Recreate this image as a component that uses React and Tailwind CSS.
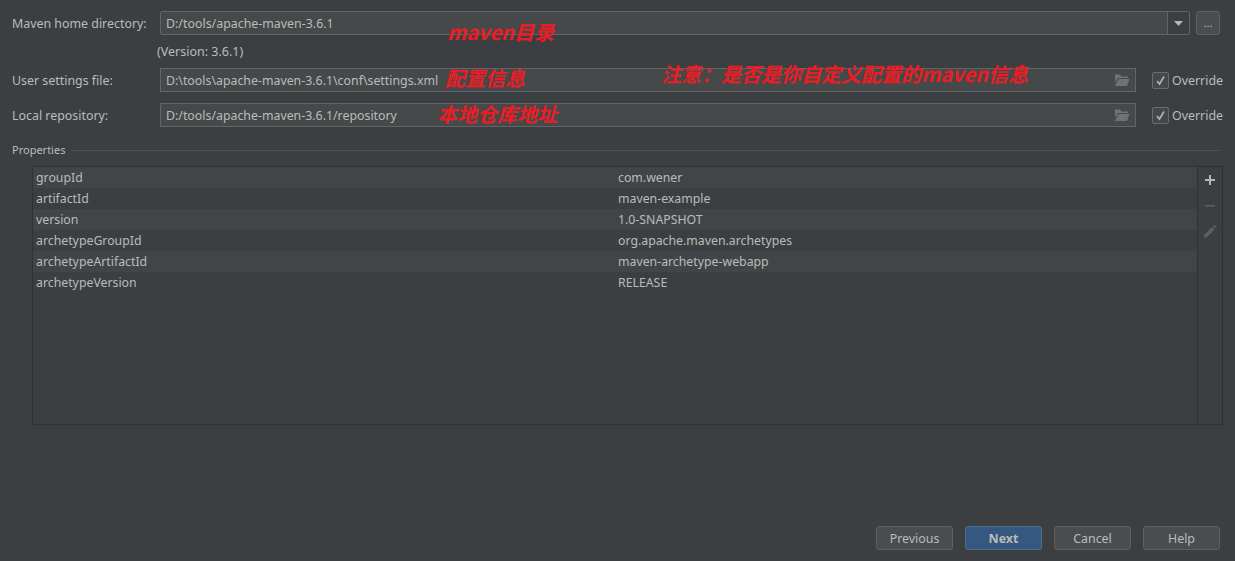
import React from 'react';

const rows = [
  ['groupId', 'com.wener'],
  ['artifactId', 'maven-example'],
  ['version', '1.0-SNAPSHOT'],
  ['archetypeGroupId', 'org.apache.maven.archetypes'],
  ['archetypeArtifactId', 'maven-archetype-webapp'],
  ['archetypeVersion', 'RELEASE'],
];

const notes = [
  { text: 'maven目录', cls: 'left-[447px] top-[19px]' },
  { text: '配置信息', cls: 'left-[445px] top-[65px]' },
  { text: '本地仓库地址', cls: 'left-[437px] top-[101px]' },
  { text: '注意\uFF1A是否是你自定义配置的maven信息', cls: 'left-[661px] top-[61px]' },
];

const FolderIcon = () => (
  <svg width="16" height="14" viewBox="0 0 16 14" className="shrink-0">
    <path d="M1 1.500h5l1.500 2H14v1.500H4L1 10z" fill="#6e7375" />
    <path d="M4.500 6H15.500L13 13H1z" fill="#6e7375" />
  </svg>
);

const FileRow = ({ label, value }) => (
  <div className="flex items-center h-6">
    <div className="w-[148px] shrink-0 pt-[2px]">{label}</div>
    <div className="w-[976px] h-6 flex items-center justify-between pl-[5px] pr-[5px] bg-[#45494a] border border-[#646464]">
      <span className="text-[12.35px] pt-[2px]">{value}</span>
      <FolderIcon />
    </div>
    <div className="ml-4 w-[17px] h-[17px] flex items-center justify-center rounded-[2px] border border-[#6b6b6b] bg-[#43494a]">
      <svg width="11" height="11" viewBox="0 0 11 11">
        <path d="M2 6l2.500 3L9 1.500" fill="none" stroke="#b4b4b4" strokeWidth="1.600" />
      </svg>
    </div>
    <span className="ml-[3px] pt-[2px]">Override</span>
  </div>
);

const Btn = ({ children, primary }) => (
  <div
    className={
      primary
        ? 'w-[77px] h-6 flex items-center justify-center pt-[2px] rounded-[3px] border border-[#4c708c] bg-[#365880] font-bold text-[#bbbbbb]'
        : 'w-[77px] h-6 flex items-center justify-center pt-[2px] rounded-[3px] border border-[#5e6060] bg-[#4a4d4f] text-[#bbbbbb]'
    }
  >
    {children}
  </div>
);

export default function App() {
  return (
    <div className="relative w-[1235px] h-[561px] overflow-hidden flex flex-col pl-3 bg-[#3c3f41] text-[#bbbbbb] text-[12.4px] font-['Noto_Sans','Open_Sans',sans-serif]">
      <div className="flex items-center h-6 mt-[11px]">
        <div className="w-[148px] shrink-0 pt-[2px]">Maven home directory:</div>
        <div className="w-[1030px] h-6 flex items-center justify-between pl-[5px] rounded-[2px] bg-[#45494a] border border-[#646464]">
          <span className="text-[12.4px] pt-[2px]">D:/tools/apache-maven-3.6.1</span>
          <div className="w-[22px] h-full flex items-center justify-center bg-[#3c3f41] border-l border-[#646464]">
            <svg width="9" height="5" viewBox="0 0 9 5">
              <path d="M0 0h9L4.500 5z" fill="#b4b6b8" />
            </svg>
          </div>
        </div>
        <div className="ml-[6px] w-[24px] h-6 flex items-center justify-center rounded-[3px] bg-[#4a4d4f] border border-[#5e6060] text-[11px]">
          ...
        </div>
      </div>

      <div className="ml-[145px] mt-[8px] h-[18px] leading-[18px] text-[12.5px]">(Version: 3.6.1)</div>

      <div className="mt-[7px]">
        <FileRow label="User settings file:" value="D:\tools\apache-maven-3.6.1\conf\settings.xml" />
      </div>
      <div className="mt-[11px]">
        <FileRow label="Local repository:" value="D:/tools/apache-maven-3.6.1/repository" />
      </div>

      <div className="flex items-center mt-[14px] h-[18px] pr-[15px]">
        <span className="text-[11px]">Properties</span>
        <div className="flex-1 ml-[6px] h-px bg-[#4f5254]" />
      </div>

      <div className="flex ml-5 mr-3 mt-[7px] h-[259px] border border-[#2f3133]">
        <div className="flex-1 flex flex-col">
          {rows.map(([k, v], i) => (
            <div
              key={k}
              className={
                i % 2 === 0
                  ? 'flex items-center h-[21px] pl-[3px] pt-[2px] bg-[#414547] text-[12.3px]'
                  : 'flex items-center h-[21px] pl-[3px] pt-[2px] bg-[#3c3f41] text-[12.3px]'
              }
            >
              <div className="w-[582px] shrink-0">{k}</div>
              <div>{v}</div>
            </div>
          ))}
        </div>
        <div className="w-[25px] shrink-0 border-l border-[#2f3133] flex flex-col items-center pt-[7px] gap-[13px]">
          <svg width="12" height="12" viewBox="0 0 12 12">
            <path d="M5 1h2v4h4v2H7v4H5V7H1V5h4z" fill="#b5b7b9" />
          </svg>
          <svg width="12" height="12" viewBox="0 0 12 12">
            <path d="M1 6h10v1.600H1z" fill="#5c5f61" />
          </svg>
          <svg width="14" height="14" viewBox="0 0 14 14">
            <path d="M1 11l8-8 2.600 2.600-8 8H1zM10 2l1.200-1.200 2.600 2.600L12.600 4.600z" fill="#5c5f61" />
          </svg>
        </div>
      </div>

      <div className="flex justify-end gap-3 mt-[101px] pr-[15px]">
        <Btn>Previous</Btn>
        <Btn primary>Next</Btn>
        <Btn>Cancel</Btn>
        <Btn>Help</Btn>
      </div>

      {notes.map((n) => (
        <div
          key={n.text}
          className={`absolute whitespace-nowrap text-[20px] leading-[26px] font-bold italic text-[#ed1c24] font-['Noto_Sans_CJK_SC','Noto_Sans',sans-serif] ${n.cls}`}
        >
          {n.text}
        </div>
      ))}
    </div>
  );
}
